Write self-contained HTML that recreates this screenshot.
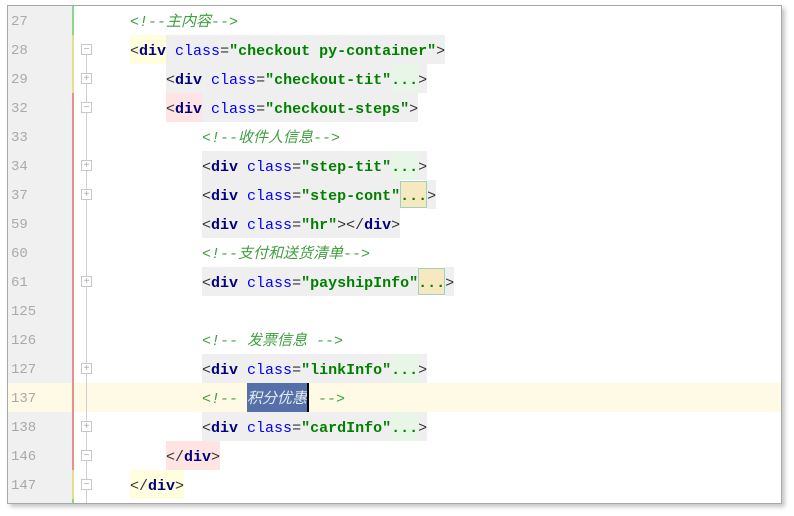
<!DOCTYPE html>
<html><head><meta charset="utf-8"><style>
*{margin:0;padding:0;box-sizing:border-box}
body{width:794px;height:516px;background:#fff;position:relative;overflow:hidden}
#frame{position:absolute;left:7px;top:5px;width:775px;height:499px;border:1px solid #a8a8a8;background:#fff;box-shadow:3px 3px 4px #c8c8c8;overflow:hidden}
#gut{position:absolute;left:0;top:0;width:64px;height:100%;background:#f0f0f0}
#fold{position:absolute;left:64px;top:0;width:14px;height:100%;background:#fff}
.ln{position:absolute;left:0;width:773px;height:29px;line-height:33px;font-family:"Liberation Mono","Noto Sans CJK SC",monospace;font-size:15px;white-space:pre}
.num{position:absolute;left:3px;top:0;color:#aaa;font-size:14px;font-family:"Liberation Mono",monospace}
.code{position:absolute;top:0;height:29px}
.code span{display:inline-block;height:29px;vertical-align:top}
.t{color:#000080;font-weight:bold}
.p{color:#333;font-weight:normal}
.a{color:#0000ff}
.s{color:#008000;font-weight:bold}
.c{color:#3f9f3f;font-style:italic}
.g{background:#efefef}
.y{background:#ffffe0}
.r{background:#ffe4e4}
.e{background:#e8f6e8}
.b{background:#f7e9bf;box-shadow:inset 0 0 0 1px #9fd0c0;height:27px!important;margin-top:1px;line-height:31px}
.bar{position:absolute;left:64px;width:2px}
.fm{position:absolute;left:73px;width:11px;height:11px;border:1px solid #c8c8c8;background:#fff;font-size:10px;line-height:9px;text-align:center;color:#aaa;font-family:"Liberation Sans",sans-serif}
</style></head><body>
<div id="frame">
<div id="gut"></div><div id="fold"></div>
<div style="position:absolute;left:0;top:377px;width:773px;height:29px;background:#fffae6"></div>
<div style="position:absolute;left:78px;top:44px;width:1px;height:455px;background:#d0d0d0"></div>
<div class="bar" style="top:0;height:29px;background:#88d888"></div>
<div class="bar" style="top:29px;height:58px;background:#e4e08a"></div>
<div class="bar" style="top:87px;height:377px;background:#e89090"></div>
<div class="bar" style="top:464px;height:29px;background:#e4e08a"></div>
<div class="bar" style="top:493px;height:6px;background:#88d888"></div>

<div class="ln" style="top:0"><span class="num">27</span><div class="code" style="left:122px"><span class="c">&lt;!--主内容--&gt;</span></div></div>
<div class="ln" style="top:29px"><span class="num">28</span><div class="code" style="left:122px"><span class="y"><span class="p">&lt;</span><span class="t">div</span></span><span class="g"> <span class="a">class</span><span class="p">=</span><span class="s">"checkout py-container"</span><span class="p">&gt;</span></span></div></div>
<div class="ln" style="top:58px"><span class="num">29</span><div class="code" style="left:158px"><span class="g"><span class="p">&lt;</span><span class="t">div</span> <span class="a">class</span><span class="p">=</span><span class="s">"checkout-tit"</span></span><span class="e s">...</span><span class="g p">&gt;</span></div></div>
<div class="ln" style="top:87px"><span class="num">32</span><div class="code" style="left:158px"><span class="r"><span class="p">&lt;</span><span class="t">div</span></span><span class="g"> <span class="a">class</span><span class="p">=</span><span class="s">"checkout-steps"</span><span class="p">&gt;</span></span></div></div>
<div class="ln" style="top:116px"><span class="num">33</span><div class="code" style="left:194px"><span class="c">&lt;!--收件人信息--&gt;</span></div></div>
<div class="ln" style="top:145px"><span class="num">34</span><div class="code" style="left:194px"><span class="g"><span class="p">&lt;</span><span class="t">div</span> <span class="a">class</span><span class="p">=</span><span class="s">"step-tit"</span></span><span class="e s">...</span><span class="g p">&gt;</span></div></div>
<div class="ln" style="top:174px"><span class="num">37</span><div class="code" style="left:194px"><span class="g"><span class="p">&lt;</span><span class="t">div</span> <span class="a">class</span><span class="p">=</span><span class="s">"step-cont"</span></span><span class="b s">...</span><span class="g p">&gt;</span></div></div>
<div class="ln" style="top:203px"><span class="num">59</span><div class="code" style="left:194px"><span class="g"><span class="p">&lt;</span><span class="t">div</span> <span class="a">class</span><span class="p">=</span><span class="s">"hr"</span><span class="p">&gt;&lt;/</span><span class="t">div</span><span class="p">&gt;</span></span></div></div>
<div class="ln" style="top:232px"><span class="num">60</span><div class="code" style="left:194px"><span class="c">&lt;!--支付和送货清单--&gt;</span></div></div>
<div class="ln" style="top:261px"><span class="num">61</span><div class="code" style="left:194px"><span class="g"><span class="p">&lt;</span><span class="t">div</span> <span class="a">class</span><span class="p">=</span><span class="s">"payshipInfo"</span></span><span class="b s">...</span><span class="g p">&gt;</span></div></div>
<div class="ln" style="top:290px"><span class="num">125</span></div>
<div class="ln" style="top:319px"><span class="num">126</span><div class="code" style="left:194px"><span class="c">&lt;!-- 发票信息 --&gt;</span></div></div>
<div class="ln" style="top:348px"><span class="num">127</span><div class="code" style="left:194px"><span class="g"><span class="p">&lt;</span><span class="t">div</span> <span class="a">class</span><span class="p">=</span><span class="s">"linkInfo"</span></span><span class="e s">...</span><span class="g p">&gt;</span></div></div>
<div class="ln" style="top:377px"><span class="num">137</span><div class="code" style="left:194px"><span class="c">&lt;!-- </span><span class="c" style="background:#5570a8;color:#e8ecf4">积分优惠</span><span style="width:2px;background:#000"></span><span class="c"> --&gt;</span></div></div>
<div class="ln" style="top:406px"><span class="num">138</span><div class="code" style="left:194px"><span class="g"><span class="p">&lt;</span><span class="t">div</span> <span class="a">class</span><span class="p">=</span><span class="s">"cardInfo"</span></span><span class="e s">...</span><span class="g p">&gt;</span></div></div>
<div class="ln" style="top:435px"><span class="num">146</span><div class="code" style="left:158px"><span class="r"><span class="p">&lt;/</span><span class="t">div</span><span class="p">&gt;</span></span></div></div>
<div class="ln" style="top:464px"><span class="num">147</span><div class="code" style="left:122px"><span class="y"><span class="p">&lt;/</span><span class="t">div</span><span class="p">&gt;</span></span></div></div>

<div class="fm" style="top:38px">−</div>
<div class="fm" style="top:67px">+</div>
<div class="fm" style="top:96px">−</div>
<div class="fm" style="top:154px">+</div>
<div class="fm" style="top:183px">+</div>
<div class="fm" style="top:270px">+</div>
<div class="fm" style="top:357px">+</div>
<div class="fm" style="top:415px">+</div>
<div class="fm" style="top:444px">−</div>
<div class="fm" style="top:473px">−</div>
</div>
</body></html>
